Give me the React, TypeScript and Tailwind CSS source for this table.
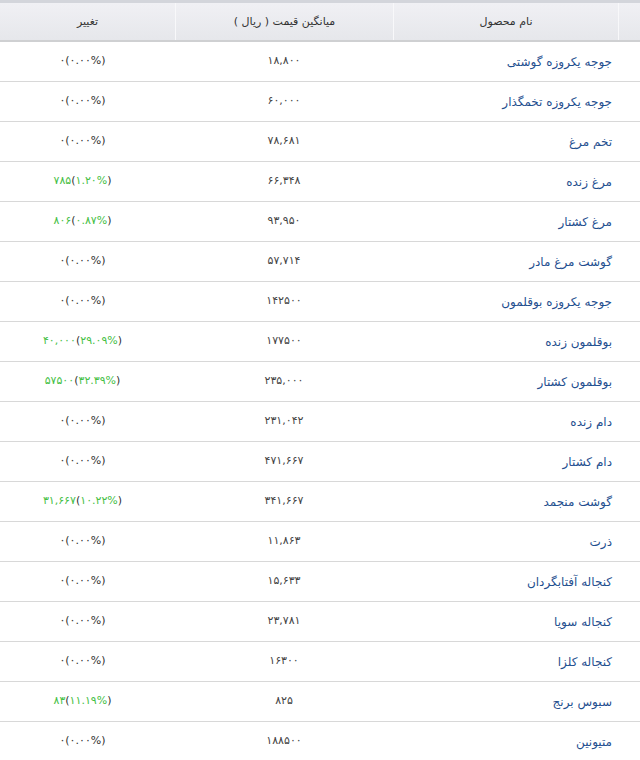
import React from "react";

type Row = {
  name: string;
  price: string;
  diff?: string;
  pct?: string;
};

const rows: Row[] = [
  { name: "جوجه یکروزه گوشتی", price: "۱۸,۸۰۰" },
  { name: "جوجه یکروزه تخمگذار", price: "۶۰,۰۰۰" },
  { name: "تخم مرغ", price: "۷۸,۶۸۱" },
  { name: "مرغ زنده", price: "۶۶,۳۴۸", diff: "۷۸۵", pct: "۱.۲۰%" },
  { name: "مرغ کشتار", price: "۹۳,۹۵۰", diff: "۸۰۶", pct: "۰.۸۷%" },
  { name: "گوشت مرغ مادر", price: "۵۷,۷۱۴" },
  { name: "جوجه یکروزه بوقلمون", price: "۱۴۲۵۰۰" },
  { name: "بوقلمون زنده", price: "۱۷۷۵۰۰", diff: "۴۰,۰۰۰", pct: "۲۹.۰۹%" },
  { name: "بوقلمون کشتار", price: "۲۳۵,۰۰۰", diff: "۵۷۵۰۰", pct: "۳۲.۳۹%" },
  { name: "دام زنده", price: "۲۳۱,۰۴۲" },
  { name: "دام کشتار", price: "۴۷۱,۶۶۷" },
  { name: "گوشت منجمد", price: "۳۴۱,۶۶۷", diff: "۳۱,۶۶۷", pct: "۱۰.۲۲%" },
  { name: "ذرت", price: "۱۱,۸۶۳" },
  { name: "کنجاله آفتابگردان", price: "۱۵,۶۳۳" },
  { name: "کنجاله سویا", price: "۲۳,۷۸۱" },
  { name: "کنجاله کلزا", price: "۱۶۳۰۰" },
  { name: "سبوس برنج", price: "۸۲۵", diff: "۸۳", pct: "۱۱.۱۹%" },
  { name: "متیونین", price: "۱۸۸۵۰۰" },
];

const font = { fontFamily: '"DejaVu Sans", Tahoma, sans-serif' };

function Change({ diff, pct }: { diff?: string; pct?: string }) {
  if (!diff) {
    return (
      <span dir="ltr" className="text-[#333]">
        ۰(۰.۰۰%)
      </span>
    );
  }
  return (
    <span dir="ltr">
      <span className="text-[#45c045]">{diff}</span>
      <span className="text-[#333]">(</span>
      <span className="text-[#45c045]">{pct}</span>
      <span className="text-[#333]">)</span>
    </span>
  );
}

export default function App() {
  return (
    <div className="w-[640px] bg-white" style={font}>
      <div className="grid grid-cols-[175px_218px_225px_22px] h-[42px] border-t-[3px] border-t-[#d3d5db] border-b-2 border-b-[#cfd0d2] bg-gradient-to-b from-[#f0f0f4] to-[#e6e7eb] text-[11px] text-[#333]">
        <div className="flex items-center justify-center pt-[2px]">تغییر</div>
        <div className="flex items-center justify-center pt-[2px] border-l border-l-[#f8f8fa]" dir="rtl">
          میانگین قیمت ( ریال )
        </div>
        <div className="flex items-center justify-center pt-[2px] border-l border-l-[#f8f8fa]" dir="rtl">
          نام محصول
        </div>
        <div className="border-l border-l-[#f8f8fa]" />
      </div>
      {rows.map((r) => (
        <div
          key={r.name}
          className="grid grid-cols-[175px_218px_247px] h-[40px] border-b border-b-[#d8d8d8] text-[11px]"
        >
          <div className="flex items-center justify-center pr-[10px] tracking-[1px]">
            <Change diff={r.diff} pct={r.pct} />
          </div>
          <div className="flex items-center justify-center text-[#444] tracking-[1px]" dir="ltr">
            {r.price}
          </div>
          <div className="flex items-center pr-[28px] text-[12px] text-[#1f4f8f]" dir="rtl">
            {r.name}
          </div>
        </div>
      ))}
    </div>
  );
}
